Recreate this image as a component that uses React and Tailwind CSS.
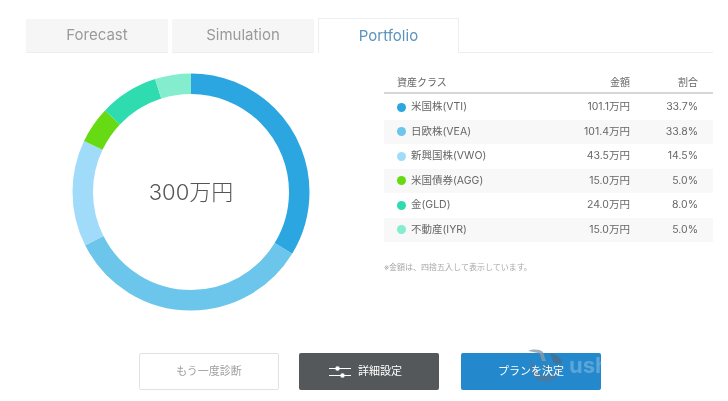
import React from 'react';

const rows = [
  { name: '米国株(VTI)', amount: '101.1万円', share: '33.7%', value: 33.7, color: '#2ca6e0' },
  { name: '日欧株(VEA)', amount: '101.4万円', share: '33.8%', value: 33.8, color: '#6cc5ea' },
  { name: '新興国株(VWO)', amount: '43.5万円', share: '14.5%', value: 14.5, color: '#a0dcf9' },
  { name: '米国債券(AGG)', amount: '15.0万円', share: '5.0%', value: 5, color: '#66da12' },
  { name: '金(GLD)', amount: '24.0万円', share: '8.0%', value: 8, color: '#2edcb0' },
  { name: '不動産(IYR)', amount: '15.0万円', share: '5.0%', value: 5, color: '#83edcd' },
];

const Donut = () => {
  const r = 108.25;
  const c = 2 * Math.PI * r;
  let offset = 0;
  return (
    <div className="relative w-[238px] h-[238px]">
      <svg width="238" height="238" viewBox="0 0 238 238" className="-rotate-90">
        {rows.map((row) => {
          const len = (row.value / 100) * c;
          const el = (
            <circle
              key={row.name}
              cx="119"
              cy="119"
              r={r}
              fill="none"
              stroke={row.color}
              strokeWidth="20.5"
              strokeDasharray={`${len} ${c - len}`}
              strokeDashoffset={-offset}
            />
          );
          offset += len;
          return el;
        })}
      </svg>
      <div className="absolute inset-0 flex items-center justify-center text-[22px] font-light text-[#555]">300万円</div>
    </div>
  );
};

// watermark sits inside the right button, under its label
const Watermark = () => (
  <div className="absolute left-[66px] top-[-7px] flex items-center pointer-events-none">
    <svg width="38" height="38" viewBox="0 0 38 38" fill="none">
      <path d="M1 5c5-2 11-2 15 1l3 9-4 0-2-7C9 6 5 6 1 5z" fill="#8c9aa6" opacity="0.8" />
      <path d="M23 7c5 1 11 4 12 9-3 3-7 3-9 0-1-3-2-6-3-9z" fill="#44708f" opacity="0.85" />
      <path d="M4 14C2 26 8 36 18 36c10 0 17-10 17-21-3 9-9 15-17 14C11 28 7 22 4 14z" fill="#4a7a9e" opacity="0.85" />
      <path d="M16 17c3 3 7 3 9 2-1 4-4 6-7 5-3-1-3-4-2-7z" fill="#4a7a9e" opacity="0.7" />
    </svg>
    <span className="ml-[4px] text-[22px] font-bold leading-none text-white/25">ush</span>
  </div>
);

const App = () => {
  return (
    <div className="relative w-[728px] h-[401px] overflow-hidden bg-white blur-[0.4px] font-['Inter','Noto_Sans_CJK_JP',sans-serif]">
      <div className="flex items-end h-[53px] pl-[26px] pr-[15px] pt-[18px]">
        <div className="w-[142px] h-[34px] mr-1 flex items-center justify-center bg-[#f6f6f6] border-b border-[#eeeeee] text-[15px] text-[#9a9a9a]">Forecast</div>
        <div className="w-[142px] h-[34px] mr-1 flex items-center justify-center bg-[#f6f6f6] border-b border-[#eeeeee] text-[15px] text-[#9a9a9a]">Simulation</div>
        <div className="w-[141px] h-[35px] flex items-center justify-center border border-b-0 border-[#eeeeee] text-[15px] text-[#5b93bd]">Portfolio</div>
        <div className="flex-1 border-b border-[#eeeeee]"></div>
      </div>

      <div className="flex pl-[72px] pt-[20px]">
        <Donut />
        <div className="ml-[74px] w-[329px] -mt-[3px]">
          <div className="flex items-center h-[18px] pt-[3px] pl-[13px] pr-[15px] border-b-2 border-[#d6d6d6] box-content pb-[1px] text-[10px] text-[#666]">
            <div className="flex-1">資産クラス</div>
            <div className="w-[60px] text-right">金額</div>
            <div className="w-[68px] text-right">割合</div>
          </div>
          <div className="mt-[1px]">
            {rows.map((row, i) => (
              <div key={row.name} className={`flex items-center h-[24.5px] pl-[13px] pr-[15px] text-[10.5px] text-[#666] ${i % 2 === 1 ? 'bg-[#f8f8f8]' : ''}`}>
                <span className="w-[9px] h-[9px] rounded-full mr-[5px]" style={{ backgroundColor: row.color }}></span>
                <div className="flex-1">{row.name}</div>
                <div className="w-[60px] text-right">{row.amount}</div>
                <div className="w-[68px] text-right">{row.share}</div>
              </div>
            ))}
          </div>
          <p className="mt-[19px] text-[8px] text-[#a8a8a8]">※金額は、四捨五入して表示しています。</p>
        </div>
      </div>

      <div className="absolute left-[139px] top-[353px] flex gap-5">
        <button className="w-[140px] h-[37px] border border-[#e2e2e2] rounded-[2px] bg-white text-[11px] text-[#a0a0a0]">もう一度診断</button>
        <button className="w-[140px] h-[37px] pr-[7px] rounded-[2px] bg-[#55585b] text-[11px] text-white flex items-center justify-center gap-[7px]">
          <svg width="22" height="12" viewBox="0 0 22 12" fill="none">
            <path d="M0 2.5h22M0 9.5h22" stroke="#fff" strokeWidth="1.2" />
            <circle cx="8.5" cy="2.5" r="2.2" fill="#fff" />
            <circle cx="13.5" cy="9.5" r="2.2" fill="#fff" />
          </svg>
          詳細設定
        </button>
        <button className="relative w-[140px] h-[37px] ml-[2px] rounded-[2px] bg-[#2488cc] text-[11px] text-white">
          <Watermark />
          <span className="relative">プランを決定</span>
        </button>
      </div>
    </div>
  );
};

export default App;
